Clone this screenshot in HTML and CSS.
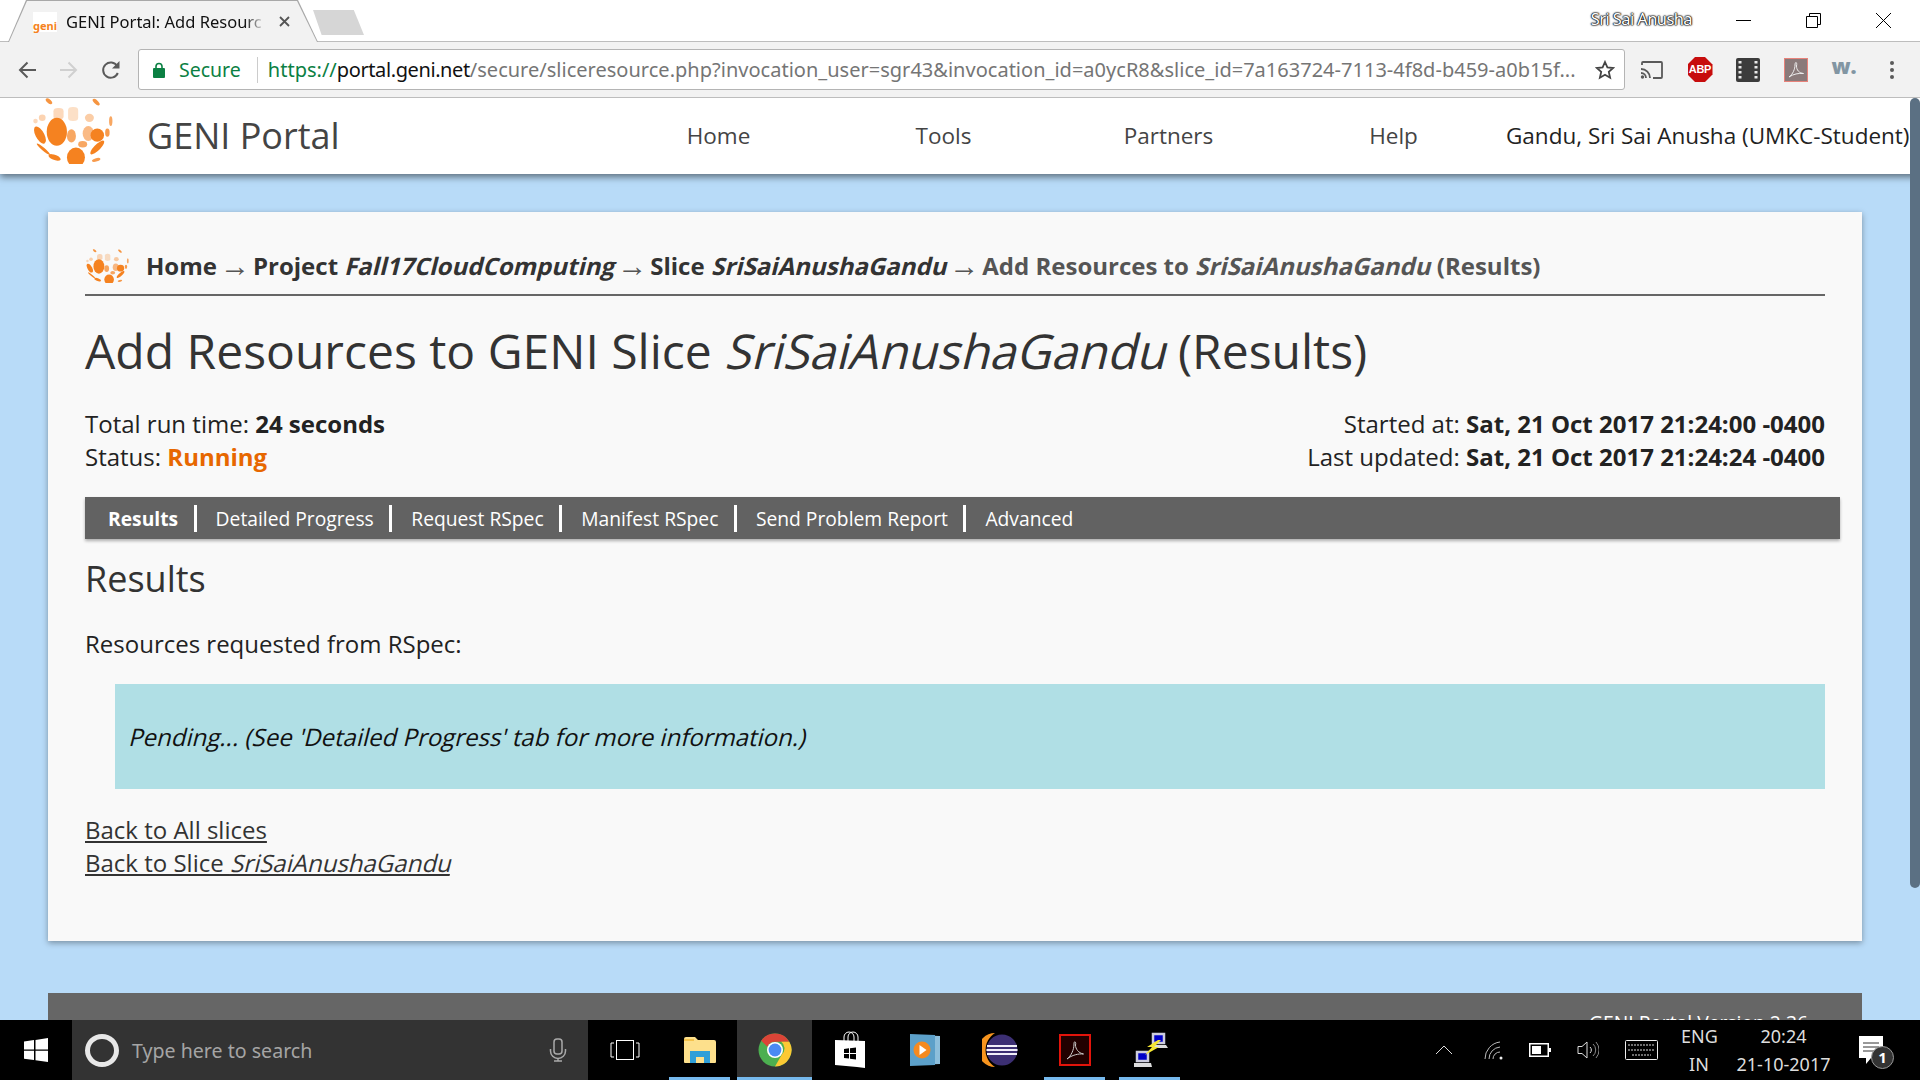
FILE: index.html
```html
<!DOCTYPE html>
<html lang="en">
<head>
    <meta charset="UTF-8">
    <title>GENI Portal: Add Resources</title>
    <link rel="stylesheet" href="styles.css">
</head>
<body>
    <svg class="defs" width="0" height="0">
        <symbol id="geni-logo" viewBox="4 0 73 80" preserveAspectRatio="none">
            <g fill="#f58220">
                <ellipse cx="20" cy="4" rx="2" ry="4" transform="rotate(-35 20 4)" opacity=".85"/>
                <ellipse cx="62" cy="5" rx="2" ry="4.500" transform="rotate(-35 62 5)" opacity=".85"/>
                <rect x="24" y="12" width="9" height="14" rx="4" opacity=".3"/>
                <rect x="37" y="11" width="9" height="17" rx="4" opacity=".25"/>
                <ellipse cx="56" cy="24" rx="4" ry="5" opacity=".4"/>
                <ellipse cx="14" cy="24" rx="3" ry="4" opacity=".35"/>
                <ellipse cx="8" cy="28" rx="2" ry="3" opacity=".3"/>
                <ellipse cx="75" cy="28" rx="1.500" ry="6" opacity=".7"/>
                <ellipse cx="27" cy="41" rx="9" ry="17" />
                <ellipse cx="40" cy="46" rx="4" ry="8" opacity=".7"/>
                <ellipse cx="55" cy="43" rx="5" ry="9" opacity=".55"/>
                <ellipse cx="72" cy="42" rx="2" ry="5" opacity=".8"/>
                <ellipse cx="63" cy="45" rx="6" ry="8"/>
                <ellipse cx="12" cy="45" rx="4" ry="11" transform="rotate(-20 12 45)"/>
                <ellipse cx="50" cy="56" rx="4" ry="4" opacity=".7"/>
                <ellipse cx="63" cy="60" rx="3" ry="10" transform="rotate(35 63 60)"/>
                <ellipse cx="44" cy="72" rx="8" ry="12"/>
                <ellipse cx="25" cy="72" rx="6" ry="3" transform="rotate(30 25 72)"/>
                <ellipse cx="15" cy="62" rx="1.500" ry="9" transform="rotate(-40 15 62)"/>
                <ellipse cx="62" cy="75" rx="4" ry="2" transform="rotate(-25 62 75)" opacity=".8"/>
            </g>
        </symbol>
    </svg>

    <div class="window">
        <!-- Browser chrome -->
        <div class="tab-strip">
            <div class="tab">
                <div class="tab-inner">
                    <span class="favicon">geni</span>
                    <span class="tab-title">GENI Portal: Add Resourc</span>
                    <svg class="tab-close" width="11" height="11" viewBox="0 0 11 11"><path d="M1 1l9 9M10 1l-9 9" stroke="#555" stroke-width="1.800"/></svg>
                </div>
            </div>
            <div class="new-tab"></div>
            <div class="window-user">Sri Sai Anusha</div>
            <div class="window-controls">
                <svg width="15" height="15" viewBox="0 0 15 15"><path d="M0 7.500h15" stroke="#000"/></svg>
                <svg width="15" height="15" viewBox="0 0 15 15"><path d="M.5 3.500h11v11H.5zM3.500 3.500v-3h11v11h-3" fill="none" stroke="#000"/></svg>
                <svg width="15" height="15" viewBox="0 0 15 15"><path d="M0 0l15 15M15 0L0 15" stroke="#000"/></svg>
            </div>
        </div>

        <div class="toolbar">
            <svg class="nav-icon" width="20" height="20" viewBox="0 0 20 20"><path d="M19 10H3M10.500 2.500L3 10l7.500 7.500" fill="none" stroke="#5a5a5a" stroke-width="2"/></svg>
            <svg class="nav-icon" width="20" height="20" viewBox="0 0 20 20"><path d="M1 10h16M9.500 2.500L17 10l-7.500 7.500" fill="none" stroke="#d0d0d0" stroke-width="2"/></svg>
            <svg class="nav-icon" width="20" height="20" viewBox="0 0 20 20"><path d="M16.800 13a7.600 7.600 0 1 1-.6-7" fill="none" stroke="#5a5a5a" stroke-width="2"/><path d="M18.500 1v7.500H11z" fill="#5a5a5a"/></svg>
            <div class="omnibox">
                <svg width="12" height="16" viewBox="0 0 12 16"><path d="M3 7V4.500a3 3 0 0 1 6 0V7" fill="none" stroke="#0b8043" stroke-width="1.600"/><rect y="6" width="12" height="10" rx="1" fill="#0b8043"/></svg>
                <span class="secure">Secure</span>
                <span class="url"><span class="scheme">https://</span><span class="host">portal.geni.net</span>/secure/sliceresource.php?invocation_user=sgr43&amp;invocation_id=a0ycR8&amp;slice_id=7a163724-7113-4f8d-b459-a0b15f...</span>
                <svg width="20" height="20" viewBox="0 0 20 20"><path d="M10 2l2.400 5.400 5.800.6-4.400 3.900 1.300 5.800-5.100-3-5.100 3 1.300-5.800L1.800 8l5.800-.6z" fill="none" stroke="#444" stroke-width="1.800"/></svg>
            </div>
            <div class="extensions">
                <div class="ext">
                    <svg width="24" height="20" viewBox="0 0 24 20"><path d="M2 5V3a1 1 0 0 1 1-1h18a1 1 0 0 1 1 1v14a1 1 0 0 1-1 1h-8" fill="none" stroke="#5a5a5a" stroke-width="1.800"/><path d="M1 9a9 9 0 0 1 9 9M1 13a5 5 0 0 1 5 5" fill="none" stroke="#5a5a5a" stroke-width="1.800"/><circle cx="2.500" cy="17" r="1.700" fill="#5a5a5a"/></svg>
                </div>
                <div class="ext"><span class="abp">ABP</span></div>
                <div class="ext">
                    <svg width="24" height="24" viewBox="0 0 24 24"><rect width="24" height="24" rx="2" fill="#3c3c3c"/><g fill="#e8e8e8"><rect x="2.500" y="3" width="3" height="2.500"/><rect x="2.500" y="8" width="3" height="2.500"/><rect x="2.500" y="13" width="3" height="2.500"/><rect x="2.500" y="18" width="3" height="2.500"/><rect x="18.500" y="3" width="3" height="2.500"/><rect x="18.500" y="8" width="3" height="2.500"/><rect x="18.500" y="13" width="3" height="2.500"/><rect x="18.500" y="18" width="3" height="2.500"/></g></svg>
                </div>
                <div class="ext">
                    <svg width="24" height="24" viewBox="0 0 24 24"><rect x=".5" y=".5" width="23" height="23" fill="#8a7a7a" stroke="#e8827a"/><path d="M5 19c4-3 6-8 6-12 0-4 2.500-3 1.500 1 0 4 2.500 7 7 7.500-5-.5-10 .5-14.500 3.500z" fill="none" stroke="#eee"/></svg>
                </div>
                <div class="ext"><span class="ext-w">w.</span></div>
                <div class="ext">
                    <svg width="8" height="20" viewBox="0 0 8 20"><g fill="#5a5a5a"><circle cx="4" cy="3" r="2"/><circle cx="4" cy="10" r="2"/><circle cx="4" cy="17" r="2"/></g></svg>
                </div>
            </div>
        </div>

        <!-- Page -->
        <div class="page">
            <header class="site-nav">
                <svg class="site-logo" width="82" height="66"><use href="#geni-logo"/></svg>
                <div class="site-name">GENI Portal</div>
                <nav class="site-links">
                    <a>Home</a>
                    <a>Tools</a>
                    <a>Partners</a>
                    <a>Help</a>
                </nav>
                <div class="site-user">Gandu, Sri Sai Anusha (UMKC-Student)</div>
            </header>

            <main class="card">
                <div class="breadcrumb">
                    <svg class="crumb-logo" width="44" height="34"><use href="#geni-logo"/></svg>
                    <b>Home</b><span class="arrow">→</span>
                    <b>Project <i>Fall17CloudComputing</i></b><span class="arrow">→</span>
                    <b>Slice <i>SriSaiAnushaGandu</i></b><span class="arrow">→</span>
                    <b class="current">Add Resources to <i>SriSaiAnushaGandu</i> (Results)</b>
                </div>

                <h1>Add Resources to GENI Slice <i>SriSaiAnushaGandu</i> (Results)</h1>

                <div class="run-info">
                    <div>
                        <div>Total run time: <b>24 seconds</b></div>
                        <div>Status: <b class="running">Running</b></div>
                    </div>
                    <div class="run-times">
                        <div>Started at: <b>Sat, 21 Oct 2017 21:24:00 -0400</b></div>
                        <div>Last updated: <b>Sat, 21 Oct 2017 21:24:24 -0400</b></div>
                    </div>
                </div>

                <ul class="tabs">
                    <li class="active">Results</li>
                    <li>Detailed Progress</li>
                    <li>Request RSpec</li>
                    <li>Manifest RSpec</li>
                    <li>Send Problem Report</li>
                    <li>Advanced</li>
                </ul>

                <h2>Results</h2>
                <p class="requested">Resources requested from RSpec:</p>
                <div class="pending"><i>Pending... (See 'Detailed Progress' tab for more information.)</i></div>

                <div class="back-links">
                    <div><a>Back to All slices</a></div>
                    <div><a>Back to Slice <i>SriSaiAnushaGandu</i></a></div>
                </div>
            </main>

            <footer class="site-footer">GENI Portal Version 2.36</footer>
            <div class="scrollbar"></div>
        </div>
    </div>

    <!-- Windows taskbar -->
    <div class="taskbar">
        <div class="start">
            <svg width="24" height="24" viewBox="0 0 24 24"><path d="M0 3.500l10-1.400V11.500H0zM11.500 1.900L24 0v11.500H11.500zM0 12.800h10v9.300L0 20.700zM11.500 12.800H24V24l-12.500-1.800z" fill="#fff"/></svg>
        </div>
        <div class="search">
            <span class="cortana"></span>
            <span class="search-text">Type here to search</span>
            <svg width="18" height="24" viewBox="0 0 18 24"><rect x="5" y="1" width="8" height="15" rx="3" fill="none" stroke="#aaa" stroke-width="1.500"/><path d="M1.500 11v2a7.500 7.500 0 0 0 15 0v-2M9 20v3M5 23h8" fill="none" stroke="#aaa" stroke-width="1.500"/></svg>
        </div>
        <div class="task-view">
            <svg width="30" height="20" viewBox="0 0 30 20"><path d="M4 3H1v14h3M26 3h3v14h-3" fill="none" stroke="#fff"/><rect x="6.500" y=".5" width="17" height="19" fill="none" stroke="#fff"/></svg>
        </div>
        <div class="task-apps">
            <div class="task-app open">
                <svg width="32" height="28" viewBox="0 0 32 28"><path d="M0 3a2 2 0 0 1 2-2h9l3 3h16a2 2 0 0 1 2 2v20a1 1 0 0 1-1 1H1a1 1 0 0 1-1-1z" fill="#fde08c"/><path d="M0 4h10" stroke="#f5c34c" stroke-width="2"/><path d="M6 27V15h20v12h-6v-6h-8v6z" fill="#2f9fd8"/></svg>
            </div>
            <div class="task-app active">
                <svg width="34" height="34" viewBox="0 0 34 34">
                    <circle cx="17" cy="17" r="16.500" fill="#4caf50"/>
                    <path d="M17 .5a16.500 16.500 0 0 1 14.300 8.250H17a8.300 8.300 0 0 0-7.600 5L3.200 7.700A16.500 16.500 0 0 1 17 .5z" fill="#db4437"/>
                    <path d="M31.300 8.750A16.500 16.500 0 0 1 17 33.500l7-12.200a8.300 8.300 0 0 0-.8-12.550z" fill="#fcc934"/>
                    <circle cx="17" cy="17" r="8" fill="#fff"/>
                    <circle cx="17" cy="17" r="6.400" fill="#4a8af4"/>
                </svg>
            </div>
            <div class="task-app">
                <svg width="32" height="38" viewBox="0 0 32 38"><path d="M10 10V6a5 5 0 0 1 10 0v4M14 10V6a5 5 0 0 1 10 0v4" fill="none" stroke="#fff"/><path d="M1 9l30 1v27l-8-1-22-2z" fill="#fff"/><path d="M10 18l5-.7V22h-5zM16 17.200l6-.8V22h-6zM10 23h5v4.500l-5-.6zM16 23h6v5.500l-6-.8z" fill="#000"/></svg>
            </div>
            <div class="task-app">
                <svg width="30" height="34" viewBox="0 0 30 34"><path d="M4 2l26 1v28L4 32z" fill="#8dbfdc"/><path d="M0 1l25 1v30L0 33z" fill="#5ca0c9"/><circle cx="12" cy="17" r="8.500" fill="#f58a1f"/><path d="M9.500 12l7 5-7 5z" fill="#fff"/></svg>
            </div>
            <div class="task-app">
                <svg width="36" height="36" viewBox="0 0 36 36"><path d="M13 1A17 17 0 0 0 13 35 20 20 0 0 1 13 1z" fill="#f7941e"/><circle cx="20" cy="18" r="15.500" fill="#3c2f73"/><path d="M5 13h30v2H5zM4.500 17h31v2h-31zM5 21h30v2H5z" fill="#f1eff8"/></svg>
            </div>
            <div class="task-app open">
                <svg width="32" height="32" viewBox="0 0 32 32"><rect x="1" y="1" width="30" height="30" fill="#200" stroke="#e2140b" stroke-width="2"/><path d="M8 25c4-3 7-9 7-15 0-4 2.500-2 1.500 1 0 4 3 8 8 9-5-.5-11.500 1-16.500 5z" fill="none" stroke="#ccc"/></svg>
            </div>
            <div class="task-app open">
                <svg width="36" height="36" viewBox="0 0 36 36"><rect x="21" y="2" width="11" height="9" fill="#0000c8" stroke="#ccd" stroke-width="2.500"/><path d="M19 13h15l2 3H21z" fill="#ddd"/><rect x="5" y="20" width="11" height="9" fill="#0000c8" stroke="#ccd" stroke-width="2.500"/><path d="M2 31h17l1 4H2z" fill="#ddd"/><path d="M26 8l-11 7h5l-7 8 14-8h-5l7-7z" fill="#f5e732"/></svg>
            </div>
        </div>
        <div class="tray">
            <svg class="tray-chevron" width="18" height="10" viewBox="0 0 18 10"><path d="M1 9l8-8 8 8" fill="none" stroke="#ddd"/></svg>
            <svg class="tray-wifi" width="20" height="20" viewBox="0 0 20 20"><path d="M1 19A17 17 0 0 1 16 2M5 19A12 12 0 0 1 16 7M9 19A7 7 0 0 1 16 12" fill="none" stroke="#bbb"/><circle cx="17" cy="18" r="1.500" fill="#eee"/></svg>
            <svg class="tray-battery" width="22" height="14" viewBox="0 0 22 14"><rect x=".75" y=".75" width="18.500" height="12.500" fill="none" stroke="#fff" stroke-width="1.500"/><rect x="3" y="3" width="9" height="8" fill="#fff"/><rect x="20" y="5" width="2" height="4" fill="#fff"/></svg>
            <svg class="tray-volume" width="22" height="20" viewBox="0 0 22 20"><path d="M1 6.500h4L10 2v16l-5-4.500H1z" fill="none" stroke="#ddd"/><path d="M13 7a4 4 0 0 1 0 6" fill="none" stroke="#ddd"/><path d="M16 4a8 8 0 0 1 0 12M19 2a12 12 0 0 1 0 16" fill="none" stroke="#888"/></svg>
            <svg class="tray-keyboard" width="33" height="20" viewBox="0 0 33 20"><rect x=".5" y=".5" width="32" height="19" rx="1" fill="none" stroke="#eee"/><path d="M3 5h27M3 10h27M7 15h19" stroke="#ddd" stroke-dasharray="2 1"/></svg>
            <div class="lang"><div>ENG</div><div>IN</div></div>
            <div class="clock"><div>20:24</div><div>21-10-2017</div></div>
            <div class="notify">
                <svg width="24" height="28" viewBox="0 0 24 28"><path d="M0 0h24v22H12l-5 6v-6H0z" fill="#fff"/><path d="M4 7h16M4 11h16M4 15h16" stroke="#333"/></svg>
                <span class="notify-count">1</span>
            </div>
        </div>
    </div>
</body>
</html>
```

FILE: styles.css
```css
/* General Styles */
html, body {
    margin: 0;
    height: 100%;
}
body {
    width: 1920px;
    height: 1080px;
    overflow: hidden;
    display: flex;
    flex-direction: column;
    font-family: "Open Sans", sans-serif;
    color: #333;
    background: #b8dbf8;
}
.defs {
    position: absolute;
}
.window {
    height: 1020px;
    overflow: hidden;
    flex: none;
    display: flex;
    flex-direction: column;
}
/* The page's italics are slanted upright letters, wider than the real italic */
.card i {
    display: inline-block;
    font-style: normal;
    transform: skewX(-14deg);
    transform-origin: 0 78%;
}

/* Tab Strip */
.tab-strip {
    height: 42px;
    flex: none;
    display: flex;
    align-items: flex-end;
    background: #fff;
    border-bottom: 1px solid #bdbdbd;
    box-sizing: border-box;
}
.tab {
    width: 310px;
    height: 42px;
    margin-left: 8px;
    margin-bottom: -1px;
    padding: 1px 1px 0;
    box-sizing: border-box;
    flex: none;
    background: #a8a8a8;
    clip-path: polygon(0 100%, 18px 0, calc(100% - 20px) 0, 100% 100%);
}
.tab-inner {
    height: 41px;
    padding-left: 24px;
    box-sizing: border-box;
    display: flex;
    align-items: center;
    background: #f2f2f2;
    clip-path: polygon(0 100%, 18px 0, calc(100% - 20px) 0, 100% 100%);
    font-family: "Noto Sans", sans-serif;
    font-size: 16.500px;
    color: #111;
}
.favicon {
    width: 24px;
    height: 20px;
    flex: none;
    display: flex;
    align-items: flex-end;
    justify-content: center;
    background: #fff;
    font-size: 11px;
    line-height: 13px;
    font-weight: 700;
    color: #f58220;
}
.tab-title {
    width: 199px;
    margin-left: 9px;
    flex: none;
    white-space: nowrap;
    overflow: hidden;
    -webkit-mask-image: linear-gradient(to right, #000 90%, transparent);
    mask-image: linear-gradient(to right, #000 90%, transparent);
}
.tab-close {
    flex: none;
    margin-left: 14px;
}
.new-tab {
    width: 51px;
    height: 25px;
    flex: none;
    margin: 0 0 6px -5px;
    background: #d6d6d6;
    clip-path: polygon(0 0, 80% 0, 100% 100%, 17% 100%);
}
.window-user {
    margin: 0 0 12px auto;
    font-family: "Noto Sans", sans-serif;
    font-size: 16.500px;
    line-height: 20px;
    letter-spacing: -.6px;
    color: #fff;
    text-shadow: 0 0 2px #000, 0 0 2px #000, 0 0 1px #000, 0 0 1px #000;
}
.window-controls {
    width: 228px;
    flex: none;
    align-self: center;
    padding-left: 44px;
    box-sizing: border-box;
    display: flex;
    gap: 55px;
}

/* Toolbar */
.toolbar {
    height: 56px;
    flex: none;
    box-sizing: border-box;
    display: flex;
    align-items: center;
    padding: 0 0 0 17px;
    background: #f2f2f2;
    border-bottom: 1px solid #bdbdbd;
}
.nav-icon {
    flex: none;
    margin-right: 22px;
}
.omnibox {
    width: 1487px;
    height: 41px;
    margin-left: -5px;
    box-sizing: border-box;
    padding: 0 9px 0 14px;
    flex: none;
    display: flex;
    align-items: center;
    background: #fff;
    border: 1px solid #b4b4b4;
    border-radius: 3px;
}
.secure {
    margin-left: 14px;
    padding-right: 16px;
    border-right: 1px solid #ccc;
    font-family: "Noto Sans", sans-serif;
    font-size: 19.500px;
    line-height: 26px;
    color: #0b8043;
}
.url {
    flex: 1;
    margin-left: 10px;
    white-space: nowrap;
    overflow: hidden;
    font-family: "Noto Sans", sans-serif;
    font-size: 20px;
    line-height: 28px;
    letter-spacing: .015px;
    color: #757575;
}
.scheme {
    color: #0b8043;
}
.host {
    color: #111;
    letter-spacing: -.4px;
}
.extensions {
    flex: 1;
    display: flex;
    align-items: center;
    padding-left: 3px;
}
.ext {
    width: 48px;
    flex: none;
    display: flex;
    justify-content: center;
}
.abp {
    width: 25px;
    height: 25px;
    clip-path: polygon(30% 0, 70% 0, 100% 30%, 100% 70%, 70% 100%, 30% 100%, 0 70%, 0 30%);
    background: #c70d0d;
    color: #fff;
    font-family: "Liberation Sans", sans-serif;
    font-size: 11px;
    letter-spacing: -.3px;
    font-weight: 700;
    line-height: 25px;
    text-align: center;
}
.ext-w {
    font-weight: 800;
    font-size: 21px;
    line-height: 18px;
    padding-bottom: 8px;
    color: #8296a3;
}

/* Page */
.page {
    flex: 1;
    position: relative;
    overflow: hidden;
    display: flex;
    flex-direction: column;
    align-items: flex-start;
}
.site-nav {
    width: 100%;
    height: 76px;
    flex: none;
    display: flex;
    align-items: center;
    background: #fff;
    box-shadow: 0 3px 7px rgba(0, 0, 0, .5);
    font-size: 22.500px;
    line-height: 30px;
    padding-left: 31px;
    box-sizing: border-box;
}
.site-logo {
    flex: none;
    margin-top: -10px;
}
.site-name {
    width: 459px;
    margin-left: 34px;
    flex: none;
    font-size: 36px;
    line-height: 48px;
    color: #444;
}
.site-links {
    width: 900px;
    flex: none;
    display: flex;
}
.site-links a {
    width: 225px;
    text-align: center;
    color: #444;
}
.site-user {
    white-space: nowrap;
    color: #222;
}

/* Material Card */
.card {
    width: 1814px;
    height: 729px;
    flex: none;
    box-sizing: border-box;
    margin: 38px 0 0 48px;
    padding: 26px 37px 0;
    background: #f9f9f9;
    box-shadow: 0 2px 6px rgba(0, 0, 0, .35);
    font-size: 24px;
    color: #222;
}
.breadcrumb {
    height: 58px;
    padding-bottom: 1px;
    box-sizing: border-box;
    display: flex;
    align-items: center;
    white-space: pre;
    border-bottom: 2px solid #666;
    color: #333;
}
.crumb-logo {
    margin-right: 17px;
    flex: none;
}
.arrow {
    margin: 0 3px;
    font-family: "Liberation Serif", serif;
    font-size: 30px;
    line-height: 30px;
    color: #555;
}
.current {
    color: #555;
}
h1 {
    margin: 22px 0 0;
    font-size: 48px;
    line-height: 66px;
    font-weight: 400;
    color: #333;
}
.run-info {
    margin-top: 23px;
    display: flex;
    justify-content: space-between;
    line-height: 33px;
}
.run-times {
    text-align: right;
}
.running {
    color: #e76700;
}

/* Tabs */
.tabs {
    width: 1755px;
    height: 42px;
    margin: 24px 0 0;
    padding: 0 0 0 4px;
    box-sizing: border-box;
    list-style: none;
    display: flex;
    align-items: center;
    background: #626262;
    box-shadow: 0 2px 3px rgba(0, 0, 0, .3);
    font-size: 19.250px;
    color: #fff;
}
.tabs li {
    padding: 0 15.500px 0 19px;
    line-height: 27px;
    border-left: 3px solid #fff;
}
.tabs li:first-child {
    border-left: none;
}
.tabs li.active {
    font-weight: 700;
}
h2 {
    margin: 15px 0 0;
    font-size: 36px;
    line-height: 49px;
    font-weight: 400;
    color: #333;
}
.requested {
    margin: 24px 0 0;
    line-height: 33px;
}
.pending {
    margin: 24px 0 0 30px;
    height: 105px;
    padding-left: 13px;
    display: flex;
    align-items: center;
    background: #b0dfe5;
    color: #111;
}
.back-links {
    margin-top: 24px;
    line-height: 33px;
}
.back-links a,
.back-links i {
    text-decoration: underline;
    color: #333;
}

/* Footer */
.site-footer {
    width: 1814px;
    height: 100px;
    flex: none;
    box-sizing: border-box;
    margin: 52px 0 0 48px;
    padding: 16px 54px 0 0;
    background: #666;
    color: #fff;
    font-size: 19.300px;
    text-align: right;
}
.scrollbar {
    position: absolute;
    top: 0;
    right: 0;
    width: 10px;
    height: 790px;
    border-radius: 5px;
    background: #5b7083;
}

/* Taskbar */
.taskbar {
    height: 60px;
    flex: none;
    display: flex;
    align-items: center;
    background: #000;
    color: #ddd;
}
.start {
    width: 72px;
    height: 100%;
    display: flex;
    align-items: center;
    justify-content: center;
}
.search {
    width: 516px;
    height: 100%;
    box-sizing: border-box;
    padding: 0 21px 0 13px;
    display: flex;
    align-items: center;
    background: #333;
}
.cortana {
    width: 24px;
    height: 23px;
    border: 5px solid #e8e8e8;
    border-radius: 50%;
    flex: none;
}
.search-text {
    flex: 1;
    margin-left: 13px;
    font-family: "Noto Sans", sans-serif;
    font-size: 19.600px;
    color: #a5a5a5;
}
.task-view {
    width: 74px;
    display: flex;
    justify-content: center;
}
.task-apps {
    display: flex;
    height: 100%;
}
.task-app {
    width: 75px;
    height: 100%;
    box-sizing: border-box;
    display: flex;
    align-items: center;
    justify-content: center;
}
.task-app.open {
    background: linear-gradient(#76b9ed, #76b9ed) center bottom / 61px 3px no-repeat;
}
.task-app.active {
    background: linear-gradient(#76b9ed, #76b9ed) center bottom / 100% 3px no-repeat, #333;
}
.tray {
    flex: 1;
    height: 100%;
    display: flex;
    align-items: center;
    font-family: "Noto Sans", sans-serif;
    font-size: 18px;
    line-height: 28px;
    text-align: center;
}
.tray-chevron {
    margin-left: 248px;
}
.tray-wifi {
    margin-left: 31px;
}
.tray-battery {
    margin-left: 25px;
}
.tray-volume {
    margin-left: 26px;
}
.tray-keyboard {
    margin-left: 26px;
}
.lang {
    width: 36px;
    margin-left: 23px;
}
.clock {
    width: 95px;
    margin-left: 19px;
}
.notify {
    position: relative;
    width: 24px;
    height: 28px;
    margin-left: 28px;
}
.notify-count {
    position: absolute;
    left: 12px;
    top: 10px;
    width: 21px;
    height: 21px;
    border: 1px solid #999;
    border-radius: 50%;
    background: #333;
    color: #fff;
    font-size: 15px;
    font-weight: 700;
    line-height: 21px;
}
```
